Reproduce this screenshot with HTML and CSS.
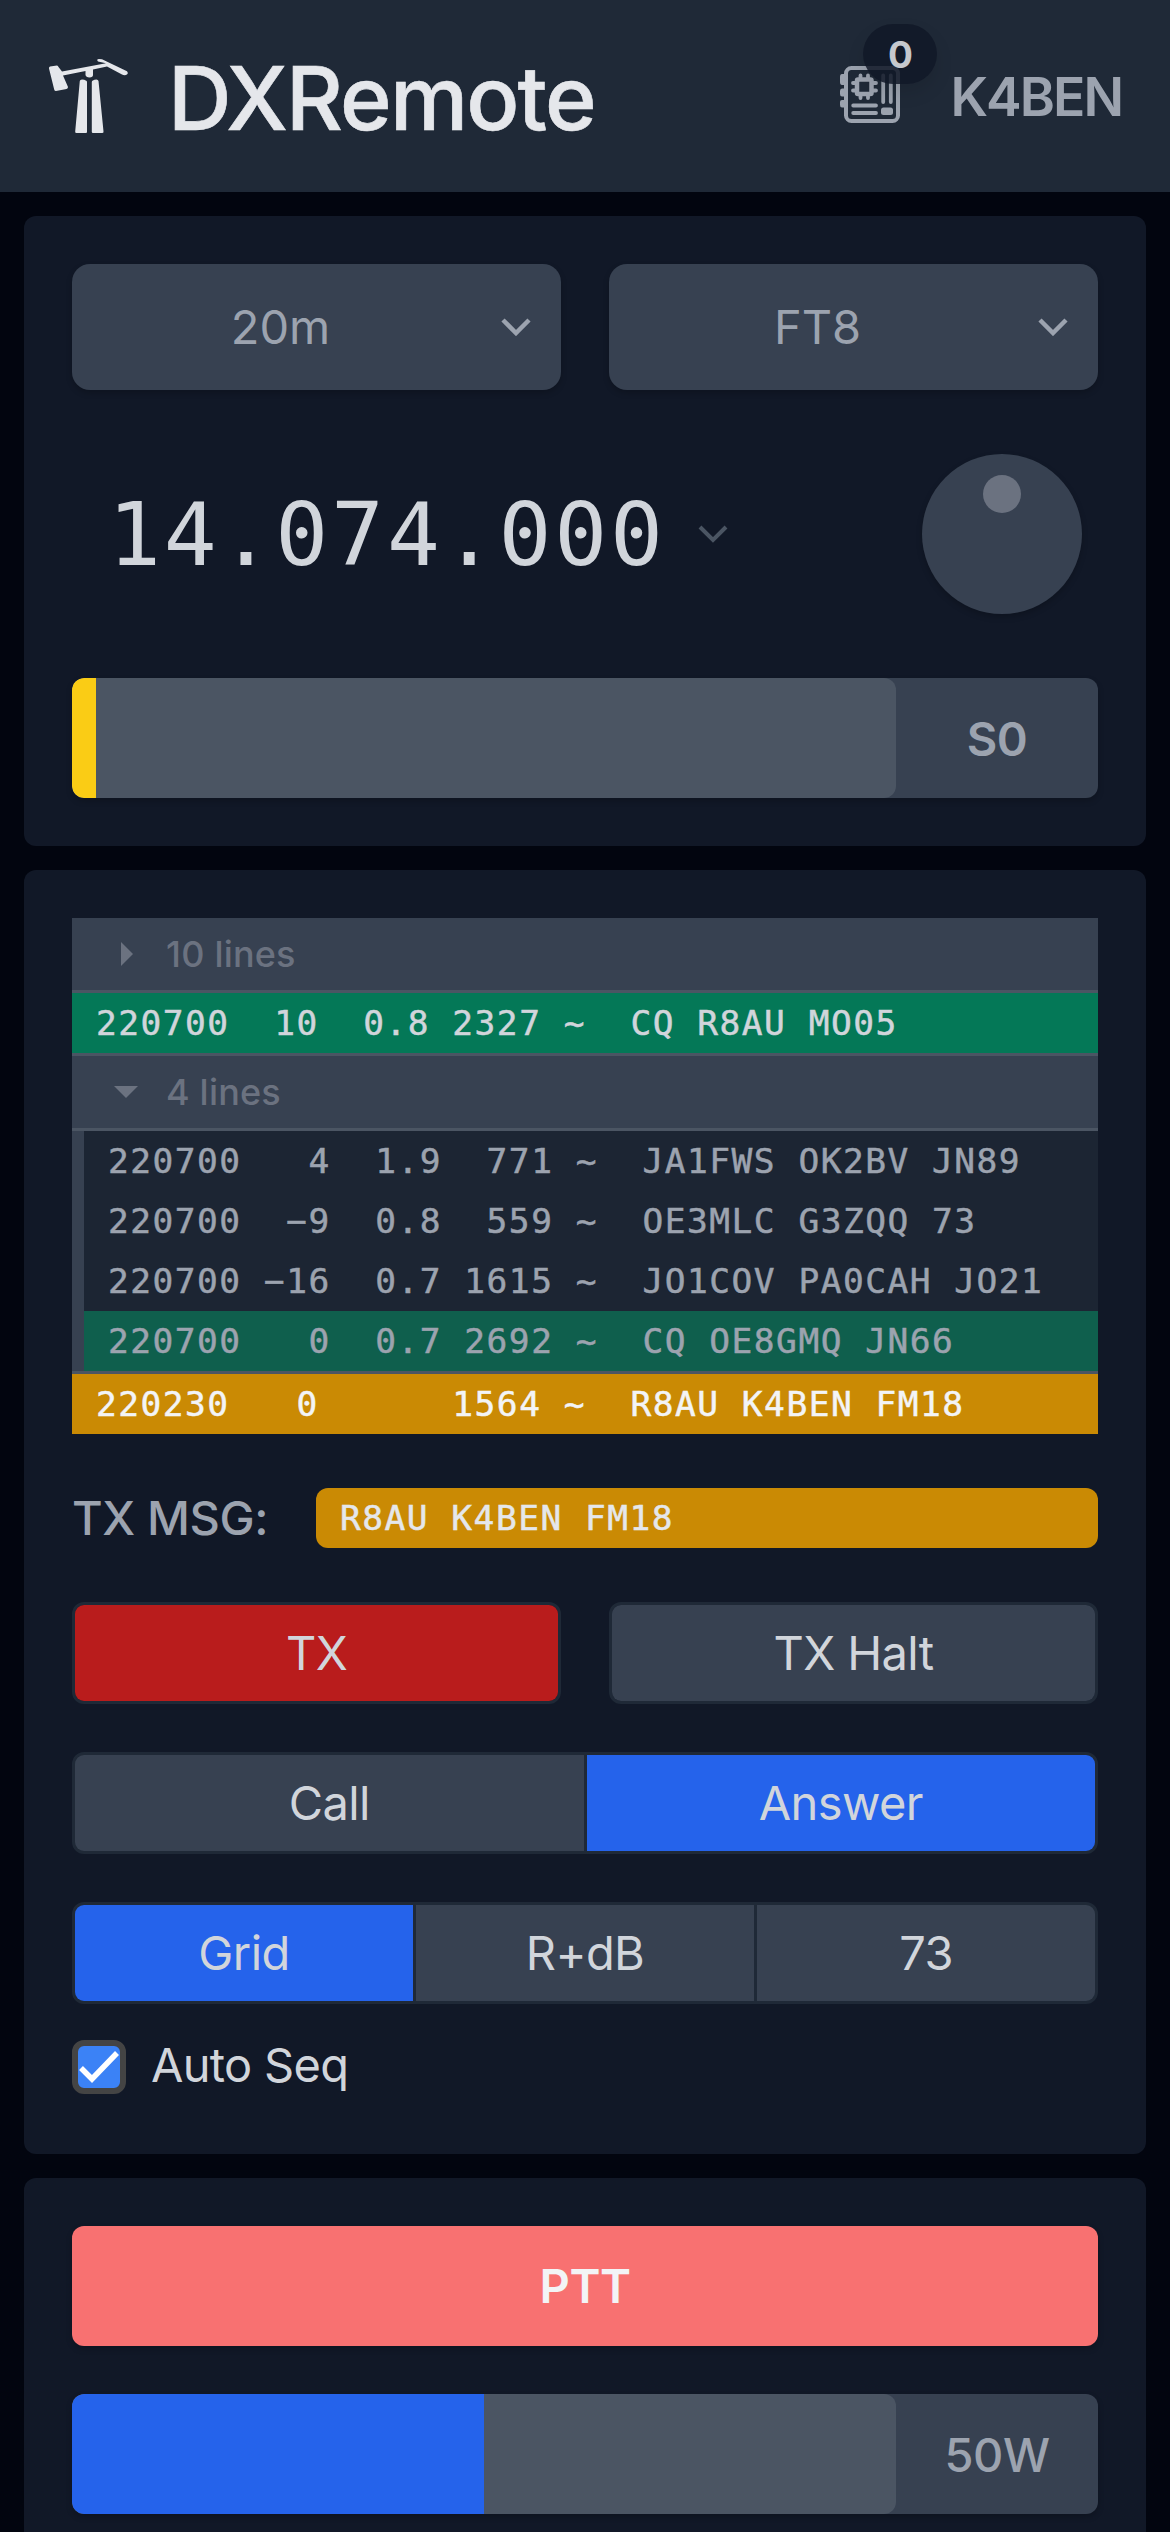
FILE: index.html
```
<!DOCTYPE html>
<html lang="en">

<head>
    <meta charset="UTF-8">
    <meta name="viewport" content="width=device-width, initial-scale=1.0">
    <title>DXRemote</title>
    <link rel="stylesheet" href="styles.css">
</head>

<body>
    <header class="header">
        <svg class="logo" viewBox="0 0 100 95">
            <path d="M10 16.5 L17 15.5 Q18 15.5 18.5 17 L22 21.500 L66 13.2 L58 11.500 Q56 9 59 9 L62 9.2 L87 21.3 Q89 24 86 25 Q84 25.500 82 24.500 L67 16.500 L53 19.500 V25 Q53 27 49.500 27.500 Q46 27 45.500 25 V21 L23 25.500 L28 37 Q28 38.500 26.500 39 L16 41 Q14.500 41 14.200 39.500 L9 18.500 Q8.800 17 10 16.500Z" />
            <path d="M42 29.500 Q47 30 47 32 V82 Q47 83 46 83 H36.500 Q35 83 35.200 81.500 L39.800 31 Q40 29.500 42 29.500Z" />
            <path d="M56.500 29.500 Q51.800 30 51.800 32 V82 Q51.800 83 53 83 H62 Q63.800 83 63.500 81.500 L58.500 31 Q58 29.500 56.500 29.500Z" />
        </svg>
        <h1 class="title">DXRemote</h1>
        <div class="station">
            <div class="rig">
                <svg class="rig-icon" viewBox="0 0 60 58">
                    <path d="M5 8 H2 Q0 8 0 11 V16 Q0 19 2 19 H5Z M5 22.500 H2 Q0 22.500 0 25 V28 Q0 30.500 2 30.500 H5Z M5 34 H2 Q0 34 0 36 V39 Q0 41.500 2 41.500 H5Z" fill="currentColor" />
                    <rect x="6" y="2" width="52" height="53" rx="5.500" fill="none" stroke="currentColor" stroke-width="4" />
                    <g fill="none" stroke="currentColor" stroke-width="3.800" stroke-linecap="round">
                        <rect x="17" y="13.500" width="14.500" height="14.500" rx="1" stroke-width="4.500" />
                        <path d="M20.500 9.500 V12 M28 9.500 V12 M20.500 30 V32 M28 30 V32 M13 17 H15 M13 24.500 H15 M33 17 H36 M33 24.500 H36" />
                        <path d="M13.200 39.500 H36 M13.200 47 H36 M43.200 9.500 V36 M50.800 9.500 V36" />
                    </g>
                    <rect x="41" y="41.500" width="12" height="7.500" rx="2.500" fill="currentColor" />
                </svg>
                <span class="badge">0</span>
            </div>
            <span class="callsign">K4BEN</span>
        </div>
    </header>

    <main class="panels">
        <section class="panel">
            <div class="columns">
                <button class="select">
                    <span>20m</span>
                    <svg class="chevron" viewBox="0 0 30 18">
                        <path d="M2 2 L15 15 L28 2" />
                    </svg>
                </button>
                <button class="select">
                    <span>FT8</span>
                    <svg class="chevron" viewBox="0 0 30 18">
                        <path d="M2 2 L15 15 L28 2" />
                    </svg>
                </button>
            </div>
            <div class="tuner">
                <span class="frequency">14.074.000</span>
                <svg class="chevron chevron-dim" viewBox="0 0 30 18">
                    <path d="M2 2 L15 15 L28 2" />
                </svg>
                <div class="knob">
                    <div class="knob-dot"></div>
                </div>
            </div>
            <div class="meter">
                <div class="meter-track">
                    <div class="meter-fill signal" style="width: 24px"></div>
                </div>
                <span class="meter-value strong">S0</span>
            </div>
        </section>

        <section class="panel">
            <div class="log">
                <div class="log-header">
                    <svg class="arrow" viewBox="0 0 24 24">
                        <path d="M7 0 L19 12 L7 24Z" />
                    </svg>
                    10 lines
                </div>
                <pre class="line cq">220700  10  0.8 2327 ~  CQ R8AU MO05</pre>
                <div class="log-header open">
                    <svg class="arrow" viewBox="0 0 24 24">
                        <path d="M0 6 H24 L12 18Z" />
                    </svg>
                    4 lines
                </div>
                <div class="log-group">
                    <pre class="line">220700   4  1.9  771 ~  JA1FWS OK2BV JN89</pre>
                    <pre class="line">220700  −9  0.8  559 ~  OE3MLC G3ZQQ 73</pre>
                    <pre class="line">220700 −16  0.7 1615 ~  JO1COV PA0CAH JO21</pre>
                    <pre class="line cq-dim">220700   0  0.7 2692 ~  CQ OE8GMQ JN66</pre>
                </div>
                <pre class="line tx">220230   0      1564 ~  R8AU K4BEN FM18</pre>
            </div>

            <div class="message">
                <label class="message-label">TX MSG:</label>
                <pre class="message-text">R8AU K4BEN FM18</pre>
            </div>

            <div class="columns">
                <div class="group"><button class="button red">TX</button></div>
                <div class="group"><button class="button">TX Halt</button></div>
            </div>

            <div class="group">
                <button class="button">Call</button>
                <button class="button active">Answer</button>
            </div>

            <div class="sequence">
                <div class="group">
                    <button class="button active">Grid</button>
                    <button class="button">R+dB</button>
                    <button class="button">73</button>
                </div>
                <label class="auto">
                    <span class="checkbox">
                        <svg viewBox="0 0 42 42">
                            <path d="M3 22 L14 33 L39 7" />
                        </svg>
                    </span>
                    <span class="auto-text">Auto Seq</span>
                </label>
            </div>
        </section>

        <section class="panel">
            <button class="ptt">PTT</button>
            <div class="meter">
                <div class="meter-track">
                    <div class="meter-fill power" style="width: 50%"></div>
                </div>
                <span class="meter-value">50W</span>
            </div>
        </section>
    </main>
</body>

</html>
```

FILE: styles.css
```
* {
    box-sizing: border-box;
}

body {
    margin: 0;
    height: 2532px;
    overflow: hidden;
    background-color: #02050f;
    color: #d1d5db;
    font-family: Inter, Roboto, sans-serif;
    font-size: 47px;
    line-height: 72px;
}

button {
    border: none;
    padding: 0;
    color: inherit;
    font: inherit;
}

svg {
    display: block;
}

pre {
    margin: 0;
    font-family: "DejaVu Sans Mono", monospace;
    font-size: 34.5px;
    letter-spacing: 1.5px;
    line-height: 60px;
    -webkit-text-stroke: 0.5px currentColor;
}

.header {
    display: flex;
    align-items: center;
    height: 192px;
    padding: 0 48px 0 40px;
    background-color: #1f2937;
}

.logo {
    width: 100px;
    height: 95px;
    margin-top: 3px;
    fill: #e5e7eb;
}

.title {
    margin: 3px 0 0 28px;
    color: #e5e7eb;
    font-size: 88px;
    font-weight: 500;
    letter-spacing: -1.8px;
    -webkit-text-stroke: 0.6px currentColor;
}

.station {
    display: flex;
    align-items: center;
    gap: 50px;
    margin-left: auto;
    color: #9ca3af;
}

.rig {
    position: relative;
}

.rig-icon {
    width: 60px;
    height: 58px;
    margin-bottom: 2px;
}

.badge {
    position: absolute;
    top: -42px;
    left: 23px;
    width: 74px;
    height: 60px;
    border-radius: 30px;
    background-color: rgba(17, 24, 39, 0.85);
    box-shadow: 0 9px 18px rgba(0, 0, 0, 0.1);
    color: #c5c8cd;
    font-size: 37px;
    font-weight: 700;
    line-height: 62px;
    text-align: center;
}

.callsign {
    padding-top: 2px;
    font-size: 53.5px;
    font-weight: 600;
    letter-spacing: -2px;
}

.panels {
    display: flex;
    flex-direction: column;
    gap: 24px;
    padding: 24px;
}

.panel {
    display: flex;
    flex-direction: column;
    gap: 48px;
    padding: 48px;
    border-radius: 12px;
    background-color: #111827;
}

.columns {
    display: grid;
    grid-template-columns: 1fr 1fr;
    gap: 48px;
}

.select {
    display: flex;
    align-items: center;
    height: 126px;
    padding-right: 30px;
    border-radius: 18px;
    background-color: #374151;
    box-shadow: 0 3px 6px rgba(0, 0, 0, 0.2);
    color: #9ca3af;
}

.select span {
    flex: 1;
    padding-right: 12px;
}

.chevron {
    width: 30px;
    height: 18px;
    fill: none;
    stroke: #9ca3af;
    stroke-width: 4.5;
}

.chevron-dim {
    stroke: #4b5563;
    stroke-width: 4;
}

.tuner {
    display: flex;
    align-items: center;
    height: 192px;
    padding: 0 16px 0 36px;
}

.frequency {
    margin-right: 32px;
    padding-top: 2px;
    font-family: "DejaVu Sans Mono", monospace;
    font-size: 88px;
    letter-spacing: 2.8px;
}

.knob {
    width: 160px;
    height: 160px;
    margin-left: auto;
    padding-top: 21px;
    border-radius: 50%;
    background-color: #374151;
    box-shadow: 0 3px 6px rgba(0, 0, 0, 0.2);
}

.knob-dot {
    width: 38px;
    height: 38px;
    margin: 0 auto;
    border-radius: 50%;
    background-color: #6b7280;
}

.meter {
    display: flex;
    height: 120px;
    border-radius: 12px;
    background-color: #374151;
    box-shadow: 0 3px 6px rgba(0, 0, 0, 0.2);
    overflow: hidden;
}

.meter-track {
    width: 824px;
    border-radius: 12px;
    background-color: #4b5563;
    overflow: hidden;
}

.meter-fill {
    height: 100%;
}

.signal {
    background-color: #facc15;
}

.power {
    background-color: #2563eb;
}

.meter-value {
    flex: 1;
    color: #9ca3af;
    font-weight: 500;
    letter-spacing: -0.5px;
    line-height: 121px;
    text-align: center;
}

.strong {
    font-weight: 600;
}

/* decoded messages */
.log-header {
    display: flex;
    align-items: center;
    gap: 28px;
    height: 75px;
    padding-left: 42px;
    border-bottom: 3px solid #4b5563;
    background-color: #374151;
    color: #6b7280;
    font-size: 36px;
    font-weight: 500;
    letter-spacing: 0.2px;
}

.open {
    height: 78px;
    border-top: 3px solid #4b5563;
}

.arrow {
    width: 24px;
    height: 24px;
    fill: #6b7280;
}

.line {
    height: 60px;
    padding-left: 24px;
}

.cq {
    background-color: #047857;
}

.log-group {
    border-left: 12px solid #374151;
    background-color: #1c2533;
    color: #9ca3af;
}

.cq-dim {
    background-color: #0f5f4d;
}

.tx {
    height: 63px;
    border-top: 3px solid #4b5563;
    background-color: #ca8a04;
    color: #f3f4f6;
}

.message {
    display: flex;
    align-items: center;
    height: 72px;
}

.message-label {
    width: 244px;
    color: #9ca3af;
    font-weight: 500;
    letter-spacing: -0.4px;
}

.message-text {
    flex: 1;
    height: 60px;
    padding-left: 24px;
    border-radius: 12px;
    background-color: #ca8a04;
    color: #e5e7eb;
}

.group {
    display: flex;
    gap: 3px;
    height: 102px;
    border: 3px solid #1f2937;
    border-radius: 12px;
    background-color: #1f2937;
    overflow: hidden;
}

.button {
    flex: 1 1 0;
    background-color: #374151;
    letter-spacing: -0.6px;
}

.red {
    background-color: #b91c1c;
}

.active {
    background-color: #2563eb;
}

.auto {
    display: flex;
    align-items: center;
    gap: 25px;
    height: 54px;
    margin: 36px 0 12px;
}

.auto-text {
    padding-bottom: 4px;
    letter-spacing: -0.7px;
}

.checkbox {
    width: 54px;
    height: 54px;
    border: 6px solid #444;
    border-radius: 12px;
    background-color: #3b82f6;
}

.checkbox svg {
    fill: none;
    stroke: #fff;
    stroke-width: 5.5;
}

.ptt {
    height: 120px;
    border-radius: 12px;
    background-color: #f87171;
    box-shadow: 0 3px 6px rgba(0, 0, 0, 0.2);
    color: #f3f4f6;
    font-weight: 600;
    letter-spacing: -0.5px;
}
```
